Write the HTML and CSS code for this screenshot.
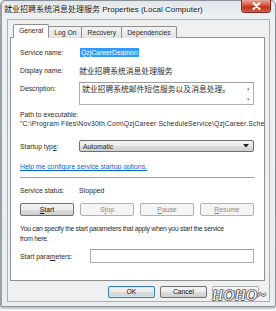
FILE: index.html
```html
<!DOCTYPE html>
<html>
<head>
<meta charset="utf-8">
<link rel="stylesheet" href="styles.css">
</head>
<body>
<div class="window">
  <div class="titlebar">
    <span class="title">就业招聘系统消息处理服务 Properties (Local Computer)</span>
    <span class="close"><svg width="9" height="8" viewBox="0 0 9 8"><path d="M1.5 1 L7.5 7 M7.5 1 L1.5 7" stroke="#fff" stroke-width="2" stroke-linecap="round"/></svg></span>
  </div>
  <div class="client">
    <div class="tabs">
      <span class="tab active">General</span>
      <span class="tab">Log On</span>
      <span class="tab">Recovery</span>
      <span class="tab">Dependencies</span>
    </div>
    <div class="panel">
      <div class="row r1">
        <span class="label">Service name:</span>
        <span class="value"><span class="sel">QzjCareerDeamon</span></span>
      </div>
      <div class="row r2">
        <span class="label">Display name:</span>
        <span class="value cjk">就业招聘系统消息处理服务</span>
      </div>
      <div class="row r3">
        <span class="label">Description:</span>
        <div class="textarea">
          <span class="cjk">就业招聘系统邮件短信服务以及消息处理。</span>
          <span class="vscroll"><span>&#9652;</span><span>&#9662;</span></span>
        </div>
      </div>
      <div class="pathlabel">Path to executable:</div>
      <div class="path">"C:\Program Files\Nov30th.Com\QzjCareer ScheduleService\QzjCareer.ScheduleService.exe"</div>
      <div class="row r4">
        <span class="label">Startup typ<u>e</u>:</span>
        <div class="select"><span>Automatic</span><svg width="6" height="4" viewBox="0 0 6 4"><path d="M0 0 H6 L3 3.5 Z" fill="#222"/></svg></div>
      </div>
      <a class="link">Help me configure service startup options.</a>
      <div class="sep"></div>
      <div class="row r5">
        <span class="label">Service status:</span>
        <span class="value">Stopped</span>
      </div>
      <div class="btns">
        <span class="btn"><u>S</u>tart</span>
        <span class="btn dis">S<u>t</u>op</span>
        <span class="btn dis"><u>P</u>ause</span>
        <span class="btn dis"><u>R</u>esume</span>
      </div>
      <p class="note">You can specify the start parameters that apply when you start the service from here.</p>
      <div class="row r6">
        <span class="label wide">Start para<u>m</u>eters:</span>
        <div class="input"></div>
      </div>
    </div>
    <div class="footer">
      <span class="btn fbtn def">OK</span>
      <span class="btn fbtn">Cancel</span>
      <span class="btn fbtn dis">Apply</span>
    </div>
  </div>
  <div class="watermark">HOHO~</div>
</div>
</body>
</html>
```
FILE: styles.css
```css
* { box-sizing: border-box; }
html, body { margin: 0; padding: 0; background: #fff; }
body {
  width: 276px; height: 311px; overflow: hidden;
  font-family: "Liberation Sans", "Noto Sans CJK SC", sans-serif;
  font-size: 6.8px; color: #2c2c2c;
}
.window {
  position: relative;
  width: 276px; height: 307px;
  background: linear-gradient(180deg, #e2e6ea 0px, #eef1f4 18px, #e9edf0 100%);
  border: 1px solid #8a9097;
  border-left: 2px solid #9aa0a6;
  border-radius: 5px 5px 2px 2px;
  display: flex; flex-direction: column;
  padding: 0 5px 4px 5px;
  box-shadow: 0 2px 2px rgba(0,0,0,0.25);
}
.titlebar {
  height: 18px; display: flex; align-items: flex-start; justify-content: space-between;
  flex: none;
}
.title {
  font-size: 8px; line-height: 9px; margin-top: 4px; margin-left: -3px; color: #111;
  text-shadow: 0 0 3px #fff, 0 0 2px #fff;
  white-space: nowrap;
}
.close {
  width: 30px; height: 13px; margin-top: -1px; margin-right: -1px;
  background: linear-gradient(180deg, #e8a193 0%, #d5553f 45%, #c0341c 55%, #d0573c 100%);
  border: 1px solid #7a2a20; border-top: none;
  border-radius: 0 0 4px 4px;
  display: flex; align-items: center; justify-content: center;
  box-shadow: inset 0 0 1px #fff;
}
.client {
  flex: 1; background: #f0f0f0; border: 1px solid #aab0b6;
  display: flex; flex-direction: column; padding: 0 4px 0 2px;
}
.tabs { display: flex; padding-left: 4px; height: 18px; align-items: flex-end; margin-bottom: -1px; position: relative; z-index: 1; }
.tab {
  height: 12px; line-height: 11px; padding: 0 5px; border: 1px solid #8e8f8f; border-bottom: none;
  background: linear-gradient(180deg, #f2f2f2, #e3e3e3); margin-left: -1px;
  border-radius: 2px 2px 0 0;
}
.tab.active { height: 14px; background: #fff; border-bottom: 1px solid #fff; line-height: 12px; z-index: 2; padding: 0 5px; }
.panel {
  height: 244px; background: #fff; border: 1px solid #8e8f8f;
  padding: 8px 10px 0 9px; display: flex; flex-direction: column;
}
.row { display: flex; align-items: center; }
.label { width: 59px; flex: none; }
.label.wide { width: 70px; }
.value { white-space: nowrap; }
.cjk { font-size: 7.8px; }
.r1 { height: 12px; }
.sel { background: #3399ff; color: #fff; padding: 1px 1px; margin-left: 1px; }
.r2 { height: 12px; margin-top: 6px; }
.r3 { align-items: flex-start; margin-top: 6px; }
.r3 .label { padding-top: 3px; }
.textarea {
  flex: 1; height: 23px; border: 1px solid #abadb3; border-top-color: #a0a0a0;
  position: relative; padding: 1px 12px 0 2px; line-height: 11px; white-space: nowrap;
}
.vscroll {
  position: absolute; right: 1px; top: 1px; bottom: 1px; width: 8px;
  display: flex; flex-direction: column; justify-content: space-between; align-items: center;
  color: #888; font-size: 5px; line-height: 8px;
}
.pathlabel { margin-top: 5px; line-height: 9px; }
.path { line-height: 9px; white-space: nowrap; overflow: hidden; margin-right: -10px; letter-spacing: 0.17px; }
.r4 { margin-top: 12px; }
.select {
  flex: 1; height: 12px; border: 1px solid #707070; border-radius: 2px;
  background: linear-gradient(180deg, #f2f2f2 0%, #ebebeb 50%, #dddddd 51%, #cfcfcf 100%);
  display: flex; align-items: center; justify-content: space-between; padding: 0 4px 0 3px;
}
.link { color: #0066cc; text-decoration: underline; margin-top: 10px; line-height: 10px; }
.sep { height: 2px; background: #a0a0a0; margin-top: 5px; border-bottom: 1px solid #fff; }
.r5 { margin-top: 6px; height: 10px; }
.btns { display: grid; grid-template-columns: repeat(4, 1fr); gap: 6px; margin-top: 8px; }
.btn {
  height: 13px; border: 1px solid #707070; border-radius: 2px; text-align: center;
  background: linear-gradient(180deg, #f2f2f2 0%, #ebebeb 50%, #dddddd 51%, #cfcfcf 100%);
  line-height: 11px; color: #111;
}
.btn.dis { border-color: #adb2b5; background: #f4f4f4; color: #8b8b8b; }
.note { margin: 8px 0 0; line-height: 10px; letter-spacing: -0.25px; max-width: 205px; }
.r6 { margin-top: 5px; }
.input { flex: 1; height: 14px; border: 1px solid #abadb3; border-top-color: #a0a0a0; }
.footer { display: flex; justify-content: flex-end; gap: 5px; padding: 5px 6px 0 0; }
.fbtn { width: 47px; height: 12px; line-height: 10px; }
.fbtn.def { border-color: #3c7fb1; box-shadow: inset 0 0 0 1px #cbe7f6; }
.watermark {
  position: absolute; right: 9px; bottom: 2px;
  font-family: "Liberation Serif", serif; font-style: italic; font-size: 15px; letter-spacing: 0.5px;
  color: #fff; text-shadow: -1px 0 #555, 1px 0 #555, 0 -1px #555, 0 1px #555;
}
```
